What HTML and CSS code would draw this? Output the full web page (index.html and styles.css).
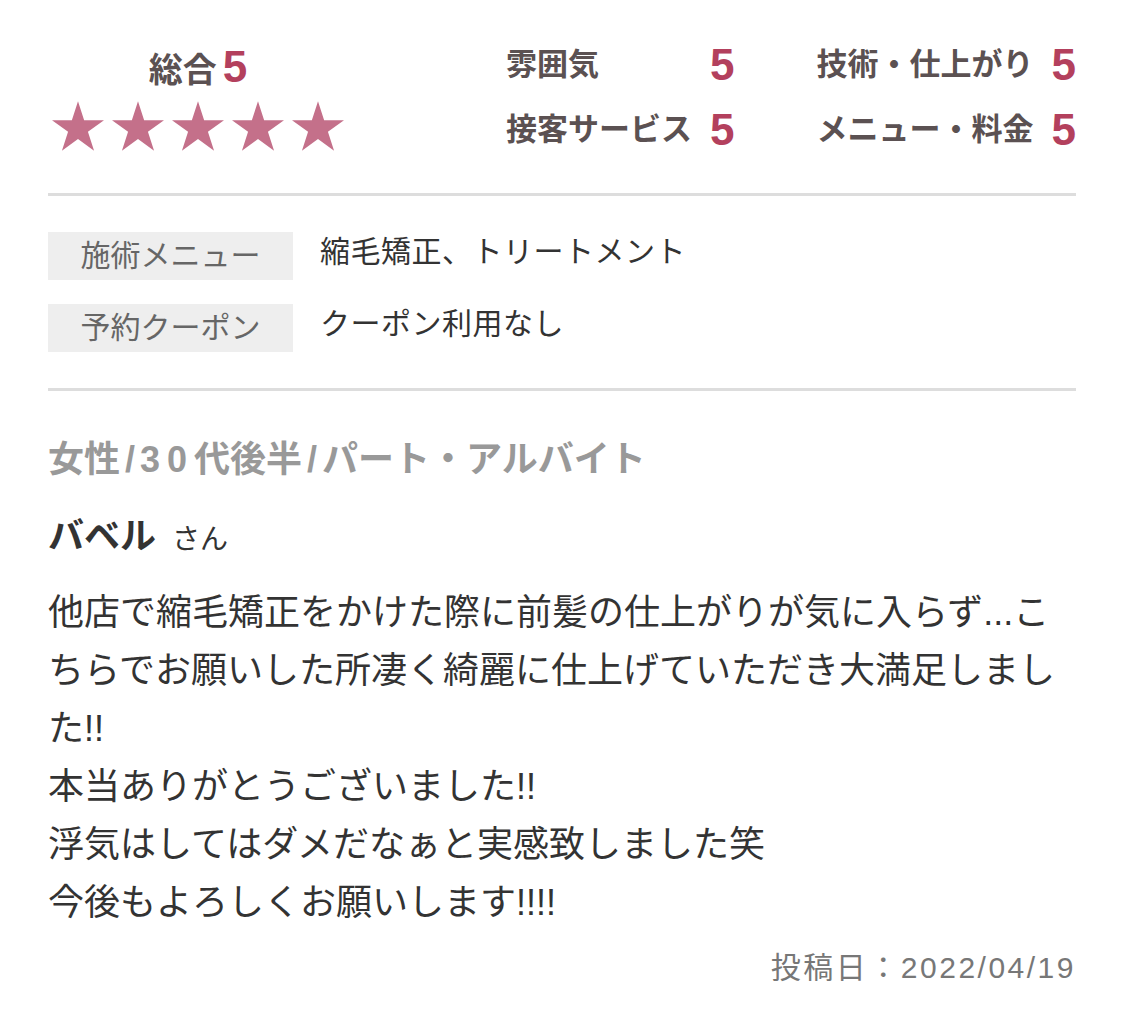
FILE: index.html
```html
<!DOCTYPE html>
<html lang="ja">
<head>
  <meta charset="UTF-8">
  <meta name="viewport" content="width=device-width, initial-scale=1.0">
  <title>口コミ</title>
  <link rel="stylesheet" href="styles.css">
</head>
<body>
  <div class="summary">
    <div class="overall">
      <div class="overall-title">総合<span class="num">5</span></div>
      <div class="stars">
        <svg class="star" viewBox="0 0 95.1 90.45"><polygon points="47.55,0 58.78,34.55 95.1,34.55 65.71,55.9 76.94,90.45 47.55,69.1 18.16,90.45 29.39,55.9 0,34.55 36.32,34.55"/></svg>
        <svg class="star" viewBox="0 0 95.1 90.45"><polygon points="47.55,0 58.78,34.55 95.1,34.55 65.71,55.9 76.94,90.45 47.55,69.1 18.16,90.45 29.39,55.9 0,34.55 36.32,34.55"/></svg>
        <svg class="star" viewBox="0 0 95.1 90.45"><polygon points="47.55,0 58.78,34.55 95.1,34.55 65.71,55.9 76.94,90.45 47.55,69.1 18.16,90.45 29.39,55.9 0,34.55 36.32,34.55"/></svg>
        <svg class="star" viewBox="0 0 95.1 90.45"><polygon points="47.55,0 58.78,34.55 95.1,34.55 65.71,55.9 76.94,90.45 47.55,69.1 18.16,90.45 29.39,55.9 0,34.55 36.32,34.55"/></svg>
        <svg class="star" viewBox="0 0 95.1 90.45"><polygon points="47.55,0 58.78,34.55 95.1,34.55 65.71,55.9 76.94,90.45 47.55,69.1 18.16,90.45 29.39,55.9 0,34.55 36.32,34.55"/></svg>
      </div>
    </div>

    <div class="scores">
      <div class="score-label">雰囲気</div>
      <div class="num">5</div>
      <div class="score-label second">技術・仕上がり</div>
      <div class="num">5</div>
      <div class="score-label">接客サービス</div>
      <div class="num">5</div>
      <div class="score-label second">メニュー・料金</div>
      <div class="num">5</div>
    </div>
  </div>

  <div class="info">
    <div class="info-row">
      <div class="info-label">施術メニュー</div>
      <div class="info-value">縮毛矯正、トリートメント</div>
    </div>
    <div class="info-row">
      <div class="info-label">予約クーポン</div>
      <div class="info-value">クーポン利用なし</div>
    </div>
  </div>

  <div class="profile">女性<span class="slash">/</span><span class="digits">30</span>代後半<span class="slash">/</span>パート・アルバイト</div>
  <div class="name">バベル<span class="honor">さん</span></div>

  <p class="comment">他店で縮毛矯正をかけた際に前髪の仕上がりが気に入らず...こちらでお願いした所凄く綺麗に仕上げていただき大満足しました!!<br>本当ありがとうございました!!<br>浮気はしてはダメだなぁと実感致しました笑<br>今後もよろしくお願いします!!!!</p>

  <div class="date">投稿日：2022/04/19</div>
</body>
</html>
```

FILE: styles.css
```css
body { margin: 0; padding: 43px 49px 20px 48px; background: #fff; color: #333; font-family: "Liberation Sans", "Noto Sans CJK JP", sans-serif; }

.summary { display: flex; justify-content: space-between; align-items: flex-start; padding-bottom: 41px; border-bottom: 3px solid #ddd; }
.num { color: #b3405d; font-size: 44px; font-weight: bold; line-height: 44px; }

.overall { width: 300px; text-align: center; padding-top: 2px; }
.overall-title { font-size: 34px; font-weight: bold; color: #5b5152; line-height: 44px; }
.overall-title .num { margin-left: 6px; }
.stars { display: flex; justify-content: center; gap: 8px; margin-top: 9px; }
.star { width: 52px; height: 50px; fill: #c4708a; }

.scores { display: grid; grid-template-columns: auto auto auto auto; column-gap: 18px; row-gap: 21px; align-items: center; }
.score-label { font-size: 31px; font-weight: bold; color: #5b5152; line-height: 44px; }
.score-label.second { padding-left: 64px; }

.info { padding: 36px 0; border-bottom: 3px solid #ddd; display: flex; flex-direction: column; gap: 24px; }
.info-row { display: flex; gap: 27px; }
.info-label { width: 245px; height: 48px; line-height: 48px; background: #eee; color: #666; font-size: 30px; text-align: center; }
.info-value { font-size: 30px; letter-spacing: 0.5px; line-height: 40px; color: #333; }

.profile { margin-top: 44px; font-size: 36px; font-weight: bold; color: #999; line-height: 50px; }
.slash { padding: 0 5px; }
.digits { letter-spacing: 7px; }
.name { margin-top: 27px; font-size: 36px; font-weight: bold; color: #333; line-height: 50px; }
.honor { margin-left: 16px; font-size: 28px; font-weight: normal; }

.comment { margin: 19px 0 0; font-size: 36px; line-height: 58px; color: #333; }
.date { margin-top: 16px; text-align: right; font-size: 30px; letter-spacing: 2.5px; line-height: 40px; color: #777; }
```
